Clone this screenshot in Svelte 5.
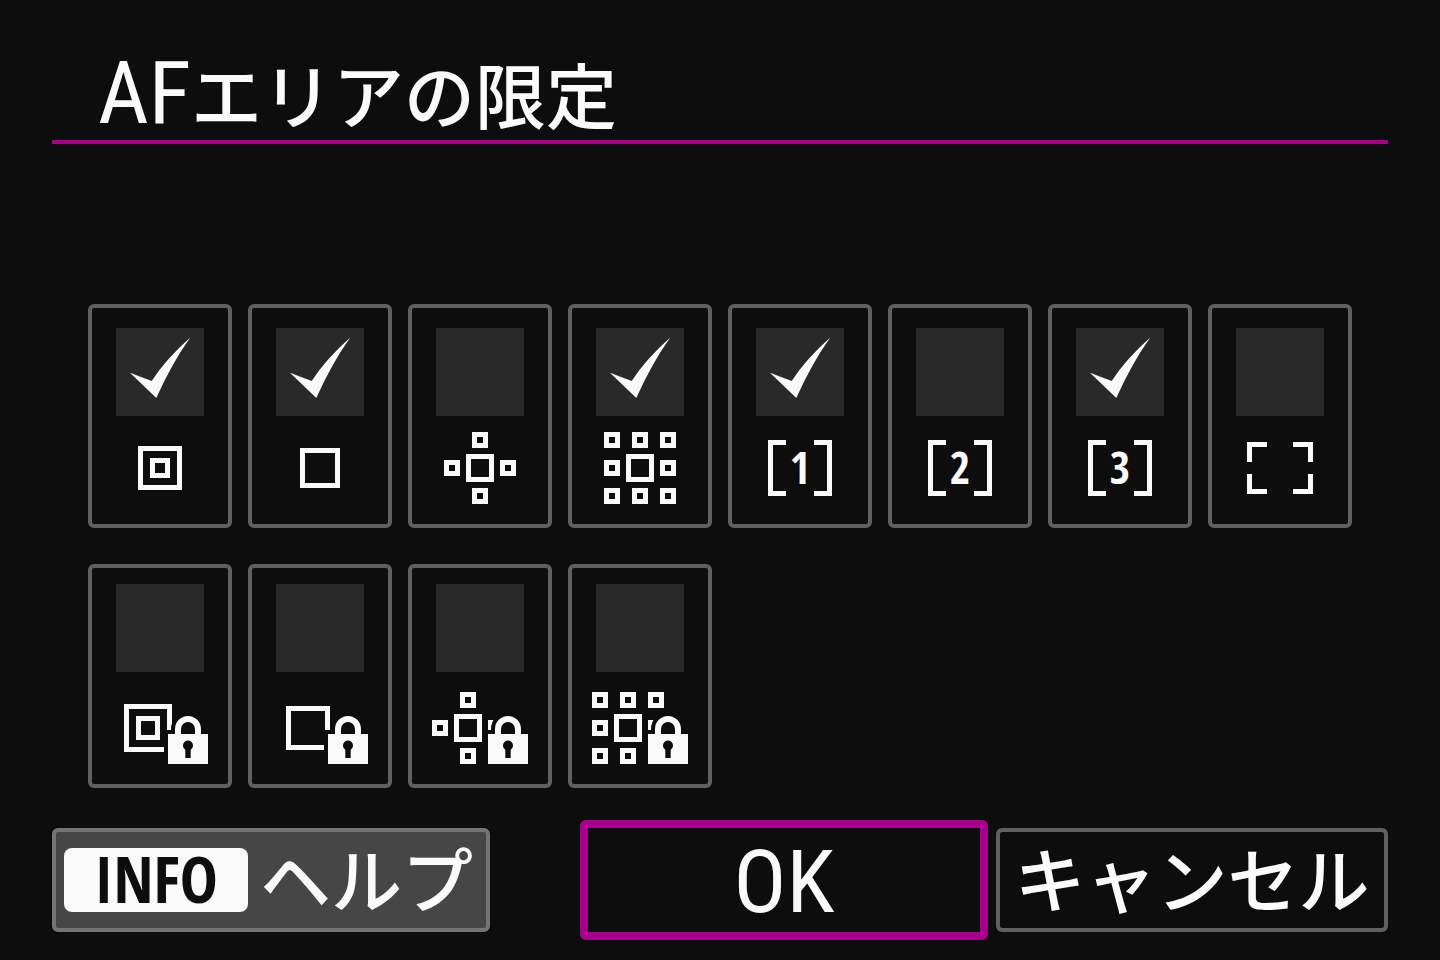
<script>
  let areas = $state([
    { id: 'spot', label: 'スポット1点AF', checked: true },
    { id: 'one', label: '1点AF', checked: true },
    { id: 'cross', label: '領域拡大AF', checked: false },
    { id: 'around', label: '領域拡大AF(周囲)', checked: true },
    { id: 'zone', number: 1, label: 'フレキシブルゾーンAF 1', checked: true },
    { id: 'zone', number: 2, label: 'フレキシブルゾーンAF 2', checked: false },
    { id: 'zone', number: 3, label: 'フレキシブルゾーンAF 3', checked: true },
    { id: 'whole', label: '全域AF', checked: false },
    { id: 'spot', locked: true, label: 'スポット1点AF 固定', checked: false },
    { id: 'one', locked: true, label: '1点AF 固定', checked: false },
    { id: 'cross', locked: true, label: '領域拡大AF 固定', checked: false },
    { id: 'around', locked: true, label: '領域拡大AF(周囲) 固定', checked: false }
  ]);

  // Each frame is [centre x, centre y, outer size]
  const cross = [[48, 12, 16], [20, 40, 16], [48, 40, 28], [76, 40, 16], [48, 68, 16]];
  const corners = [[20, 12, 16], [76, 12, 16], [20, 68, 16], [76, 68, 16]];

  function frames(area) {
    if (area.id === 'spot') {
      return area.locked ? [[36, 40, 48], [36, 40, 24]] : [[48, 40, 44], [48, 40, 20]];
    }
    if (area.id === 'one') return area.locked ? [[36, 40, 44]] : [[48, 40, 40]];
    const set = area.id === 'cross' ? cross : area.id === 'around' ? [...cross, ...corners] : [];
    return area.locked ? set.map(([x, y, s]) => [x - 12, y, s]) : set;
  }
</script>

<main>
  <header>
    <h1><span class="latin">AF</span>エリアの限定</h1>
  </header>

  <section class="areas">
    {#each areas as area}
      <label class="area" class:locked={area.locked}>
        <span class="box">
          <input type="checkbox" aria-label={area.label} bind:checked={area.checked} />
          {#if area.checked}
            <svg class="check" viewBox="0 0 88 88" aria-hidden="true">
              <path d="M14 44.8 35.7 53Q50 31 74.3 9.6 56 35 40.3 70Z" />
            </svg>
          {/if}
        </span>
        <svg class="icon" viewBox="0 0 96 80" aria-hidden="true">
          {#each frames(area) as [x, y, s]}
            <rect class="line" x={x - s / 2 + 2.5} y={y - s / 2 + 2.5} width={s - 5} height={s - 5} />
          {/each}
          {#if area.id === 'zone'}
            <path class="line" d="M34 14.5H18.5V65.5H34M62 14.5H77.5V65.5H62" />
            <text x="48" y="56" text-anchor="middle">{area.number}</text>
          {:else if area.id === 'whole'}
            <path class="line" d="M35 16.5H17.5V34M61 16.5H78.5V34M35 63.5H17.5V46M61 63.5H78.5V46" />
          {/if}
          {#if area.locked}
            <path class="halo" d="M52 42H96V80H52Z" />
            <path class="halo-line" d="M66 46V41a10 10 0 0 1 20 0V46" />
            <path class="shackle" d="M66 47V41a10 10 0 0 1 20 0V47" />
            <path class="solid" d="M56 46H96V76H56Z" />
            <circle class="halo" cx="76" cy="57.5" r="5" />
            <path class="halo" d="M73.3 58H78.7V70H73.3Z" />
          {/if}
        </svg>
      </label>
    {/each}
  </section>

  <footer>
    <button class="help"><span class="badge">INFO</span><span class="kana">ヘルプ</span></button>
    <button class="ok"><span class="latin">OK</span></button>
    <button class="cancel"><span class="kana">キャンセル</span></button>
  </footer>
</main>

<style>
  :global(body) {
    margin: 0;
    background: #0d0d0d;
  }

  main {
    box-sizing: border-box;
    min-height: 100vh;
    padding: 44px 52px 20px;
    display: flex;
    flex-direction: column;
    color: #fafafa;
    font-family: 'Noto Sans CJK JP', sans-serif;
    font-weight: 500;
  }

  header {
    padding: 0 46px;
    border-bottom: 4px solid #a8008c;
  }

  h1 {
    margin: 0;
    font-size: 71px;
    line-height: 96px;
    font-weight: 500;
    white-space: nowrap;
  }

  .latin {
    font-family: 'Roboto Condensed', 'Liberation Sans Narrow', 'Noto Sans CJK JP', sans-serif;
    font-size: 88px;
    font-weight: 400;
    line-height: 1;
  }

  .areas {
    margin-top: 160px;
    padding: 0 36px;
    display: grid;
    grid-template-columns: repeat(8, 1fr);
    gap: 36px 16px;
  }

  .area {
    box-sizing: border-box;
    padding: 20px 0 16px;
    border: 4px solid #606060;
    border-radius: 6px;
    display: flex;
    flex-direction: column;
    align-items: center;
    gap: 12px;
  }

  .area.locked {
    padding-top: 16px;
    gap: 16px;
  }

  .box {
    display: grid;
  }

  .box > * {
    grid-area: 1 / 1;
  }

  input {
    appearance: none;
    width: 88px;
    height: 88px;
    margin: 0;
    background: #292929;
  }

  .check {
    width: 88px;
    height: 88px;
    fill: #fafafa;
    pointer-events: none;
  }

  .icon {
    width: 96px;
    height: 80px;
  }

  .line {
    fill: none;
    stroke: #fafafa;
    stroke-width: 5;
  }

  .icon text {
    fill: #fafafa;
    font-family: 'Open Sans Condensed', 'Liberation Sans Narrow', sans-serif;
    font-size: 44px;
    font-weight: 700;
  }

  .solid {
    fill: #fafafa;
  }

  .shackle {
    fill: none;
    stroke: #fafafa;
    stroke-width: 6;
  }

  .halo {
    fill: #0d0d0d;
  }

  .halo-line {
    fill: #0d0d0d;
    stroke: #0d0d0d;
    stroke-width: 14;
  }

  footer {
    margin-top: auto;
    display: grid;
    grid-template-columns:
      minmax(0, 438fr) minmax(0, 74fr)
      minmax(0, 408fr) minmax(0, 392fr);
    align-items: center;
    gap: 8px;
  }

  button {
    box-sizing: border-box;
    height: 104px;
    padding: 0;
    border: 4px solid #606060;
    border-radius: 6px;
    display: flex;
    align-items: center;
    justify-content: center;
    background: #0d0d0d;
    color: #fafafa;
    font-family: inherit;
    font-size: 71px;
    font-weight: 500;
    line-height: 88px;
    white-space: nowrap;
  }

  .kana {
    padding-bottom: 8px;
  }

  .help {
    padding: 0 8px;
    justify-content: flex-start;
    gap: 12px;
    border-color: #747474;
    background: #464646;
  }

  .badge {
    width: 184px;
    height: 64px;
    border-radius: 8px;
    background: #fafafa;
    color: #0d0d0d;
    font-family: 'Open Sans Condensed', 'Liberation Sans Narrow', sans-serif;
    font-size: 64px;
    font-weight: 700;
    line-height: 62px;
    text-align: center;
  }

  .ok {
    grid-column: 3;
    height: 120px;
    padding-top: 4px;
    border: 8px solid #a8008c;
  }
</style>
